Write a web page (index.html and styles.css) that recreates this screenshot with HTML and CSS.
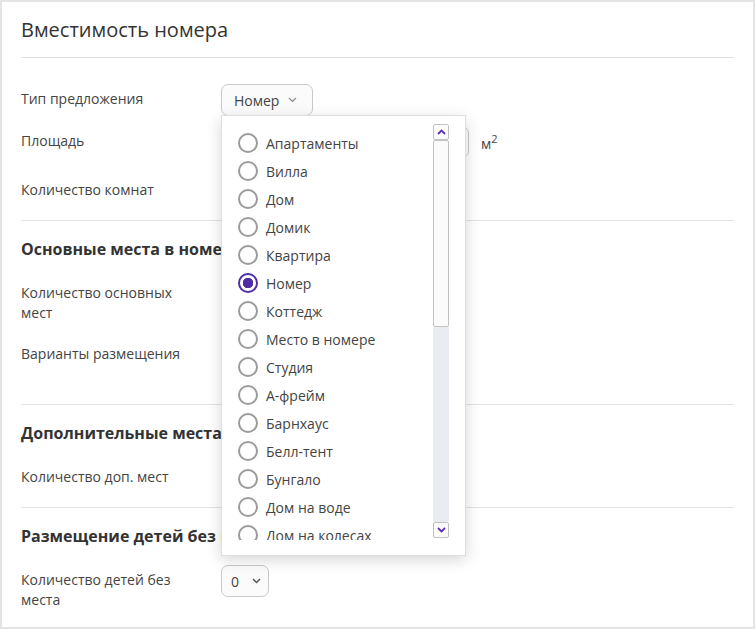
FILE: index.html
```html
<!DOCTYPE html>
<html lang="ru">

<head>
    <meta charset="UTF-8">
    <meta name="viewport" content="width=device-width, initial-scale=1.0">
    <title>Вместимость номера</title>
    <link rel="stylesheet" href="styles.css">
</head>

<body>
    <div class="card">
        <h1 class="card-title">Вместимость номера</h1>

        <div class="section section-first">
            <div class="field field-type">
                <div class="field-label">Тип предложения</div>
                <div class="field-control">
                    <div class="select-wrap">
                        <button type="button" class="select select-type">
                            Номер
                            <svg class="chevron-light" width="9" height="6" viewBox="0 0 9 6"><path d="M1 1l3.5 3.5L8 1" fill="none" stroke="#8a8a8a" stroke-width="1.2"/></svg>
                        </button>
                        <div class="dropdown">
                            <ul class="option-list">
                                <li class="option"><span class="radio"></span>Апартаменты</li>
                                <li class="option"><span class="radio"></span>Вилла</li>
                                <li class="option"><span class="radio"></span>Дом</li>
                                <li class="option"><span class="radio"></span>Домик</li>
                                <li class="option"><span class="radio"></span>Квартира</li>
                                <li class="option"><span class="radio radio-checked"></span>Номер</li>
                                <li class="option"><span class="radio"></span>Коттедж</li>
                                <li class="option"><span class="radio"></span>Место в номере</li>
                                <li class="option"><span class="radio"></span>Студия</li>
                                <li class="option"><span class="radio"></span>А-фрейм</li>
                                <li class="option"><span class="radio"></span>Барнхаус</li>
                                <li class="option"><span class="radio"></span>Белл-тент</li>
                                <li class="option"><span class="radio"></span>Бунгало</li>
                                <li class="option"><span class="radio"></span>Дом на воде</li>
                                <li class="option"><span class="radio"></span>Дом на колесах</li>
                                <li class="option"><span class="radio"></span>Дом на дереве</li>
                                <li class="option"><span class="radio"></span>Глэмпинг</li>
                                <li class="option"><span class="radio"></span>Гостевой дом</li>
                                <li class="option"><span class="radio"></span>Купол</li>
                                <li class="option"><span class="radio"></span>Палатка</li>
                                <li class="option"><span class="radio"></span>Сафари-тент</li>
                                <li class="option"><span class="radio"></span>Таунхаус</li>
                                <li class="option"><span class="radio"></span>Трейлер</li>
                                <li class="option"><span class="radio"></span>Шале</li>
                                <li class="option"><span class="radio"></span>Шатер</li>
                                <li class="option"><span class="radio"></span>Эллинг</li>
                                <li class="option"><span class="radio"></span>Юрта</li>
                                <li class="option"><span class="radio"></span>Хостел</li>
                            </ul>
                            <div class="scrollbar">
                                <div class="scroll-btn">
                                    <svg width="9" height="6" viewBox="0 0 9 6"><path d="M1 5l3.5-3.5L8 5" fill="none" stroke="#5b31b8" stroke-width="1.8"/></svg>
                                </div>
                                <div class="scroll-thumb"></div>
                                <div class="scroll-track"></div>
                                <div class="scroll-btn">
                                    <svg width="9" height="6" viewBox="0 0 9 6"><path d="M1 1l3.5 3.5L8 1" fill="none" stroke="#5b31b8" stroke-width="1.8"/></svg>
                                </div>
                            </div>
                        </div>
                    </div>
                </div>
            </div>
            <div class="field">
                <div class="field-label">Площадь</div>
                <div class="field-control">
                    <input type="text" class="input input-area">
                    <span class="unit">м<sup>2</sup></span>
                </div>
            </div>
            <div class="field">
                <div class="field-label">Количество комнат</div>
                <div class="field-control">
                    <div class="select select-small">1</div>
                </div>
            </div>
        </div>

        <div class="section section-main">
            <h2 class="section-title">Основные места в номере</h2>
            <div class="field">
                <div class="field-label">Количество основных мест</div>
                <div class="field-control">
                    <div class="select select-small">2</div>
                </div>
            </div>
            <div class="field">
                <div class="field-label">Варианты размещения</div>
                <div class="field-control field-control-tall"></div>
            </div>
        </div>

        <div class="section">
            <h2 class="section-title">Дополнительные места</h2>
            <div class="field">
                <div class="field-label">Количество доп. мест</div>
                <div class="field-control">
                    <div class="select select-small">0</div>
                </div>
            </div>
        </div>

        <div class="section">
            <h2 class="section-title">Размещение детей без места</h2>
            <div class="field">
                <div class="field-label">Количество детей без места</div>
                <div class="field-control">
                    <div class="select select-small">
                        0
                        <svg width="9" height="6" viewBox="0 0 9 6"><path d="M1 1l3.5 3.5L8 1" fill="none" stroke="#555" stroke-width="1.5"/></svg>
                    </div>
                </div>
            </div>
        </div>
    </div>
</body>

</html>
```

FILE: styles.css
```css
* {
    box-sizing: border-box;
}

body {
    margin: 0;
    font-family: "Open Sans", "Noto Sans", sans-serif;
    color: #444;
    background: #fff;
}

.card {
    width: 755px;
    height: 629px;
    border: 2px solid #e4e4e4;
    padding: 0 19px;
    overflow: hidden;
}

.card-title {
    margin: 0;
    padding: 14px 0 13px;
    font-size: 20px;
    line-height: 28px;
    font-weight: 400;
    color: #333;
    border-bottom: 1px solid #e2e2e2;
}

.section {
    padding: 17px 0 13px;
    border-bottom: 1px solid #e2e2e2;
}

.section:last-child {
    border-bottom: 0;
}

.section-first {
    padding: 26px 0 13px;
}

.section-first .field {
    margin-bottom: 17px;
}

.section-first .field:last-child {
    margin-bottom: 0;
}

.section-first .field-type {
    margin-bottom: 10px;
}

.section-title {
    margin: 0 0 18px;
    font-size: 16px;
    line-height: 22px;
    font-weight: 700;
    color: #333;
}

.field {
    display: flex;
    align-items: flex-start;
    margin-bottom: 16px;
}

.field:last-child {
    margin-bottom: 0;
}

.field-label {
    width: 180px;
    margin-right: 20px;
    padding-top: 5px;
    font-size: 14px;
    line-height: 20px;
    color: #444;
}

.field-control {
    display: flex;
    align-items: center;
    min-height: 32px;
}

.field-control-tall {
    min-height: 52px;
}

.select-wrap {
    position: relative;
}

.select {
    display: flex;
    align-items: center;
    height: 32px;
    padding: 0 12px;
    font-family: inherit;
    font-size: 14px;
    color: #444;
    background: #fbfbfb;
    border: 1px solid #c9c9c9;
    border-radius: 7px;
}

.select-type {
    width: 92px;
    gap: 9px;
    padding-left: 12px;
}

.select-small {
    width: 48px;
    padding-left: 9px;
    justify-content: space-between;
    padding-right: 7px;
}

.input {
    height: 32px;
    border: 1px solid #c9c9c9;
    border-radius: 7px;
    background: #fff;
}

.input-area {
    width: 248px;
}

.unit {
    margin-left: 12px;
    font-size: 14px;
    color: #444;
}

.unit sup {
    font-size: 11px;
}

.dropdown {
    position: absolute;
    top: 31px;
    left: 0;
    z-index: 10;
    display: flex;
    align-items: flex-start;
    width: 245px;
    height: 441px;
    padding: 8px 16px 14px 16px;
    background: #fff;
    border: 1px solid #dedede;
    box-shadow: 0 4px 14px rgba(0, 0, 0, 0.16);
}

.option-list {
    flex: 1;
    height: 416px;
    margin: 0;
    padding: 5px 0 0;
    list-style: none;
    overflow: hidden;
}

.option {
    display: flex;
    align-items: center;
    height: 28px;
    gap: 8px;
    font-size: 14px;
    color: #444;
}

.radio {
    width: 20px;
    height: 20px;
    border: 2px solid #9b9b9b;
    border-radius: 50%;
    flex-shrink: 0;
}

.radio-checked {
    border-color: #4e2ca6;
    background: radial-gradient(circle, #4e2ca6 0 5px, #fff 5.5px);
}

.scrollbar {
    display: flex;
    flex-direction: column;
    width: 16px;
    height: 414px;
}

.scroll-btn {
    display: flex;
    align-items: center;
    justify-content: center;
    height: 16px;
    background: #fbfbfb;
    border: 1px solid #c2c2c2;
    border-radius: 2px;
}

.scroll-thumb {
    height: 187px;
    background: #fbfbfb;
    border: 1px solid #c2c2c2;
    border-radius: 2px;
}

.scroll-track {
    flex: 1;
    background: #e9ecf0;
}
```
